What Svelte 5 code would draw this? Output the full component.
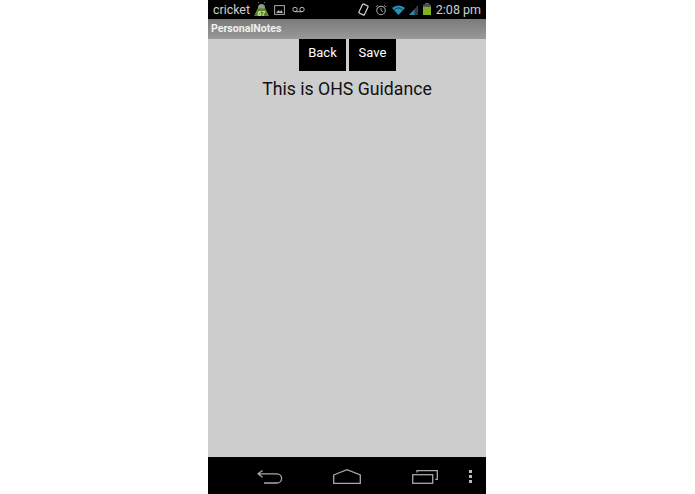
<script>
  let title = 'PersonalNotes';
  let message = 'This is OHS Guidance';
</script>

<div class="page">
  <div class="phone">
    <div class="status-bar">
      <span class="carrier">cricket</span>
      <svg class="ic-android" width="15" height="14" viewBox="0 0 15 14">
        <path d="M4 5.5a3.5 3.5 0 0 1 7 0V7H4z" fill="#8f9a88" />
        <path d="M5 1 4 0M10 1l1-1" stroke="#8f9a88" stroke-width="0.8" />
        <path d="M3.5 6.5h8L15 14H0z" fill="#56821f" />
        <text x="7.5" y="13.5" text-anchor="middle" class="batt-pct">67</text>
      </svg>
      <svg class="ic-pic" width="11" height="10" viewBox="0 0 11 10">
        <rect x="0.6" y="0.6" width="9.8" height="8.8" fill="none" stroke="#aaa" stroke-width="1" />
        <path d="M2 8l2.5-3 1.5 1.5L7.5 5 9 8z" fill="#aaa" />
      </svg>
      <svg class="ic-vm" width="13" height="7" viewBox="0 0 13 7">
        <circle cx="3" cy="3.5" r="2.2" fill="none" stroke="#bbb" stroke-width="1" />
        <circle cx="10" cy="3.5" r="2.2" fill="none" stroke="#bbb" stroke-width="1" />
        <path d="M3 5.7h7" stroke="#bbb" stroke-width="1" />
      </svg>
      <div class="spacer"></div>
      <svg class="ic-rotate" width="13" height="13" viewBox="0 0 13 13">
        <rect x="3.5" y="1.5" width="6" height="10" rx="1" transform="rotate(25 6.5 6.5)" fill="none" stroke="#d5d5d5" stroke-width="1.2" />
      </svg>
      <svg class="ic-alarm" width="12" height="12" viewBox="0 0 13 13">
        <circle cx="6.5" cy="7" r="4.6" fill="none" stroke="#aaa" stroke-width="1.1" />
        <path d="M6.5 4.2V7l2 1.3M1 3.2 3 1.2M12 3.2l-2-2" fill="none" stroke="#aaa" stroke-width="1" />
      </svg>
      <svg class="ic-wifi" width="13" height="10" viewBox="0 0 13 10">
        <path d="M0 3a9.5 9.5 0 0 1 13 0L6.5 10z" fill="#2c8fb5" />
        <path d="M2.6 4.6a6 6 0 0 1 7.8 0" fill="none" stroke="#0b2a38" stroke-width="0.9" />
      </svg>
      <svg class="ic-signal" width="11" height="10" viewBox="0 0 10 11">
        <path d="M10 0v11H0z" fill="#2b3d48" />
        <path d="M6 5v6H0z" fill="#2f86a8" />
      </svg>
      <svg class="ic-battery" width="8" height="12" viewBox="0 0 8 12">
        <rect x="2" y="0" width="4" height="1.5" fill="#666" />
        <rect x="0" y="1.5" width="8" height="2.5" fill="#555" />
        <rect x="0" y="4" width="8" height="8" fill="#7fb21f" />
      </svg>
      <span class="clock">2:08 pm</span>
    </div>

    <div class="title-bar">{title}</div>

    <div class="content">
      <div class="buttons">
        <button class="btn">Back</button>
        <button class="btn">Save</button>
      </div>
      <p class="message">{message}</p>
    </div>

    <div class="nav-bar">
      <svg class="ic-back" width="26" height="14" viewBox="0 0 26 14">
        <path d="M5.5 0.5 1 3.8l4.5 3.4M1 3.8h19a4.6 4.6 0 0 1 0 9.2H7" fill="none" stroke="#a8a8a8" stroke-width="1.3" />
      </svg>
      <svg class="ic-home" width="28" height="15" viewBox="0 0 28 15">
        <path d="M0.7 6 14 0.7 27.3 6v8.3H0.7z" fill="none" stroke="#a8a8a8" stroke-width="1.3" />
      </svg>
      <svg class="ic-recent" width="26" height="14" viewBox="0 0 26 14">
        <rect x="0.7" y="4.7" width="20" height="8.6" fill="none" stroke="#a8a8a8" stroke-width="1.3" />
        <path d="M5 2.5V0.7h20.3v8.6h-2" fill="none" stroke="#a8a8a8" stroke-width="1.3" />
      </svg>
      <div class="dots"><i></i><i></i><i></i></div>
    </div>
  </div>
</div>

<style>
  :global(body) {
    margin: 0;
    background: #fff;
  }

  .page {
    height: 494px;
    padding-left: 208px;
    font-family: Roboto, "Liberation Sans", sans-serif;
  }

  .phone {
    width: 278px;
    height: 494px;
    display: flex;
    flex-direction: column;
  }

  .status-bar {
    height: 19px;
    background: #000;
    display: flex;
    align-items: center;
    padding: 0 5px;
    color: #d0d0d0;
  }

  .carrier {
    font-size: 12.4px;
    margin-right: 4px;
  }

  .ic-android {
    margin-top: -1px;
  }

  .ic-pic {
    margin-left: 5px;
  }

  .ic-vm {
    margin-left: 7px;
  }

  .spacer {
    flex: 1;
  }

  .ic-alarm {
    margin-left: 5px;
  }

  .ic-wifi {
    margin-left: 5px;
  }

  .ic-signal {
    margin-left: 3px;
  }

  .ic-battery {
    margin-left: 4px;
    margin-top: -1px;
  }

  .clock {
    font-size: 12.5px;
    margin-left: 5px;
  }

  .batt-pct {
    font-size: 7px;
    font-weight: 700;
    fill: #d8e8c0;
    font-family: "Liberation Sans", sans-serif;
  }

  .title-bar {
    height: 20px;
    background: linear-gradient(#7a7a7a, #999);
    color: #f0f0f0;
    font-size: 10.6px;
    font-weight: 700;
    line-height: 20px;
    padding-left: 3px;
  }

  .content {
    flex: 1;
    background: #cdcdcd;
    display: flex;
    flex-direction: column;
    align-items: center;
  }

  .buttons {
    display: flex;
    gap: 3px;
    margin-left: 1px;
  }

  .btn {
    width: 47px;
    height: 32px;
    margin: 0;
    padding: 0 0 6px;
    border: none;
    background: #000;
    color: #fff;
    font-family: inherit;
    font-size: 13px;
  }

  .message {
    margin: 7px 0 0;
    font-size: 17.7px;
    line-height: 22px;
    color: #111;
  }

  .nav-bar {
    height: 37px;
    background: #000;
    display: flex;
    align-items: center;
    padding-top: 2px;
    box-sizing: border-box;
  }

  .ic-back {
    margin-left: 49px;
  }

  .ic-home {
    margin-left: 50px;
  }

  .ic-recent {
    margin-left: 51px;
  }

  .dots {
    margin-left: 31px;
    display: flex;
    flex-direction: column;
    gap: 2px;
  }

  .dots i {
    width: 3px;
    height: 3px;
    background: #bbb;
    display: block;
  }
</style>
